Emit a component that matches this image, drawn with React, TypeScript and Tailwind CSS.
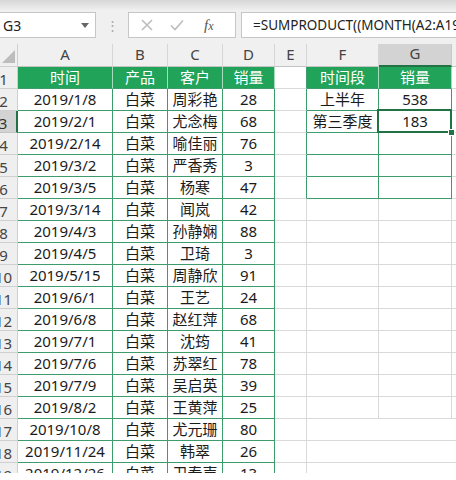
import React from "react";

const data: [string, string, string, string][] = [
  ["2019/1/8", "白菜", "周彩艳", "28"],
  ["2019/2/1", "白菜", "尤念梅", "68"],
  ["2019/2/14", "白菜", "喻佳丽", "76"],
  ["2019/3/2", "白菜", "严香秀", "3"],
  ["2019/3/5", "白菜", "杨寒", "47"],
  ["2019/3/14", "白菜", "闻岚", "42"],
  ["2019/4/3", "白菜", "孙静娴", "88"],
  ["2019/4/5", "白菜", "卫琦", "3"],
  ["2019/5/15", "白菜", "周静欣", "91"],
  ["2019/6/1", "白菜", "王艺", "24"],
  ["2019/6/8", "白菜", "赵红萍", "68"],
  ["2019/7/1", "白菜", "沈筠", "41"],
  ["2019/7/6", "白菜", "苏翠红", "78"],
  ["2019/7/9", "白菜", "吴启英", "39"],
  ["2019/8/2", "白菜", "王黄萍", "25"],
  ["2019/10/8", "白菜", "尤元珊", "80"],
  ["2019/11/24", "白菜", "韩翠", "26"],
  ["2019/12/26", "白菜", "卫春声", "13"],
];

const summary: Record<number, [string, string]> = {
  1: ["时间段", "销量"],
  2: ["上半年", "538"],
  3: ["第三季度", "183"],
};

const widths = [
  "w-[28px]",
  "w-[95px]",
  "w-[55px]",
  "w-[55px]",
  "w-[52px]",
  "w-[32px]",
  "w-[72px]",
  "w-[73px]",
  "w-[60px]",
];

const letters = ["", "A", "B", "C", "D", "E", "F", "G", "H"];

const green = "border-[#3c9c6c]";
const head = "bg-[#21a35a] text-white";

function Cell({
  col,
  className,
  children,
}: {
  col: number;
  className: string;
  children?: React.ReactNode;
}) {
  return (
    <div
      className={`${widths[col]} h-[22px] shrink-0 flex items-center justify-center whitespace-nowrap ${className}`}
    >
      {children}
    </div>
  );
}

function SheetRow({ r }: { r: number }) {
  const d = r >= 2 ? data[r - 2] : null;
  const s = summary[r];
  const isHead = r === 1;
  const mainCls = isHead
    ? `${head} border-r border-b border-r-[#a6dbbb] border-b-[#3c9c6c]`
    : `border-r border-b ${green}`;
  const sumCls =
    r <= 6
      ? mainCls
      : r >= 17
        ? "border-b border-[#d9d9d9]"
        : "border-r border-b border-[#d9d9d9]";

  return (
    <div className="flex">
      <Cell
        col={0}
        className={
          r === 3
            ? "bg-[#d3d3d3] border-b border-b-[#c4c4c4] border-r-2 border-r-[#217346] text-[#333]"
            : "bg-[#efefef] border-r border-b border-[#cfcfcf] text-[#444]"
        }
      >
        <span className="pt-[3px]">{r}</span>
      </Cell>
      <Cell col={1} className={mainCls}>
        {isHead ? "时间" : d?.[0]}
      </Cell>
      <Cell col={2} className={mainCls}>
        {isHead ? "产品" : d?.[1]}
      </Cell>
      <Cell col={3} className={mainCls}>
        {isHead ? "客户" : d?.[2]}
      </Cell>
      <Cell col={4} className={mainCls}>
        {isHead ? "销量" : d?.[3]}
      </Cell>
      <Cell
        col={5}
        className={
          r <= 6
            ? "border-r border-b border-r-[#3c9c6c] border-b-[#d9d9d9]"
            : "border-r border-b border-[#d9d9d9]"
        }
      />
      <Cell col={6} className={sumCls}>
        {s?.[0]}
      </Cell>
      <Cell col={7} className={`${sumCls} ${r === 3 ? "relative" : ""}`}>
        {s?.[1]}
        {r === 3 && (
          <div className="absolute -left-[2px] -top-[2px] -right-[1px] -bottom-[1px] border-2 border-[#217346]">
            <div className="absolute -right-[5px] -bottom-[5px] w-[7px] h-[7px] bg-[#217346] border border-white" />
          </div>
        )}
      </Cell>
      <Cell col={8} className="border-b border-[#d9d9d9]" />
    </div>
  );
}

export default function App() {
  return (
    <div className="w-[456px] h-[480px] overflow-hidden bg-white font-['Noto_Sans','Noto_Sans_CJK_SC',sans-serif] text-[15px] text-[#1b1b1b]">
      {/* formula bar */}
      <div className="h-[44px] bg-[#f0f0f0]">
        <div className="h-[10px] bg-linear-to-b from-[#d6d6d6] to-[#efefef]" />
        <div className="flex items-start h-[26px] mt-[2px]">
          <div className="w-[96px] h-[26px] bg-white border border-l-0 border-[#c6c6c6] flex items-center justify-between pl-[3px] pr-[6px] text-[14px] text-[#222]">
            <span>G3</span>
            <span className="w-0 h-0 border-l-[4px] border-r-[4px] border-t-[5px] border-l-transparent border-r-transparent border-t-[#666]" />
          </div>
          <div className="w-[32px] h-[26px] flex items-center justify-center text-[#a8a8a8] text-[13px] leading-none">
            ⋮
          </div>
          <div className="w-[108px] h-[26px] bg-white border border-[#c6c6c6] flex items-center pl-[11px] gap-[15px]">
            <svg width="14" height="14" viewBox="0 0 14 14">
              <path d="M2 2L12 12M12 2L2 12" stroke="#bdbdbd" strokeWidth="1.6" />
            </svg>
            <svg width="16" height="14" viewBox="0 0 16 14">
              <path d="M2 7.5L6 11.5L14 2.5" stroke="#bdbdbd" strokeWidth="1.6" fill="none" />
            </svg>
            <span className="font-['Liberation_Serif',serif] italic text-[15px] text-[#555] ml-[4px]">
              f<span className="text-[12px]">x</span>
            </span>
          </div>
          <div className="ml-[5px] flex-1 h-[26px] bg-white border border-r-0 border-[#c6c6c6] flex items-center pl-[11px] overflow-hidden whitespace-nowrap text-[13.5px] text-[#222]">
            =SUMPRODUCT((MONTH(A2:A19)&gt;=7)*(MONTH(A2:A19)&lt;=9)*D2:D19)
          </div>
        </div>
      </div>

      {/* sheet */}
      <div className="h-[429px] overflow-hidden">
        <div className="-ml-[10px]">
          <div className="flex h-[23px] bg-[#f0f0f0] text-[#444]">
            {letters.map((l, i) => (
              <div
                key={`col-${i}`}
                className={`${widths[i]} h-[23px] shrink-0 flex items-end justify-center pb-[1px] ${
                  i === 0
                    ? "justify-end items-end pr-[2px] pb-[3px] border-r border-b border-[#cfcfcf]"
                    : i === 7
                      ? "bg-[#d3d3d3] border-r border-r-[#c8c8c8] border-b-2 border-b-[#217346]"
                      : "border-r border-b border-r-[#d6d6d6] border-b-[#c4c4c4]"
                }`}
              >
                {i === 0 ? (
                  <svg width="13" height="13" viewBox="0 0 13 13">
                    <path d="M13 0L13 13L0 13Z" fill="#bdbdbd" />
                  </svg>
                ) : (
                  l
                )}
              </div>
            ))}
          </div>
          {Array.from({ length: 19 }, (_, i) => (
            <SheetRow key={`row-${i + 1}`} r={i + 1} />
          ))}
        </div>
      </div>
    </div>
  );
}
